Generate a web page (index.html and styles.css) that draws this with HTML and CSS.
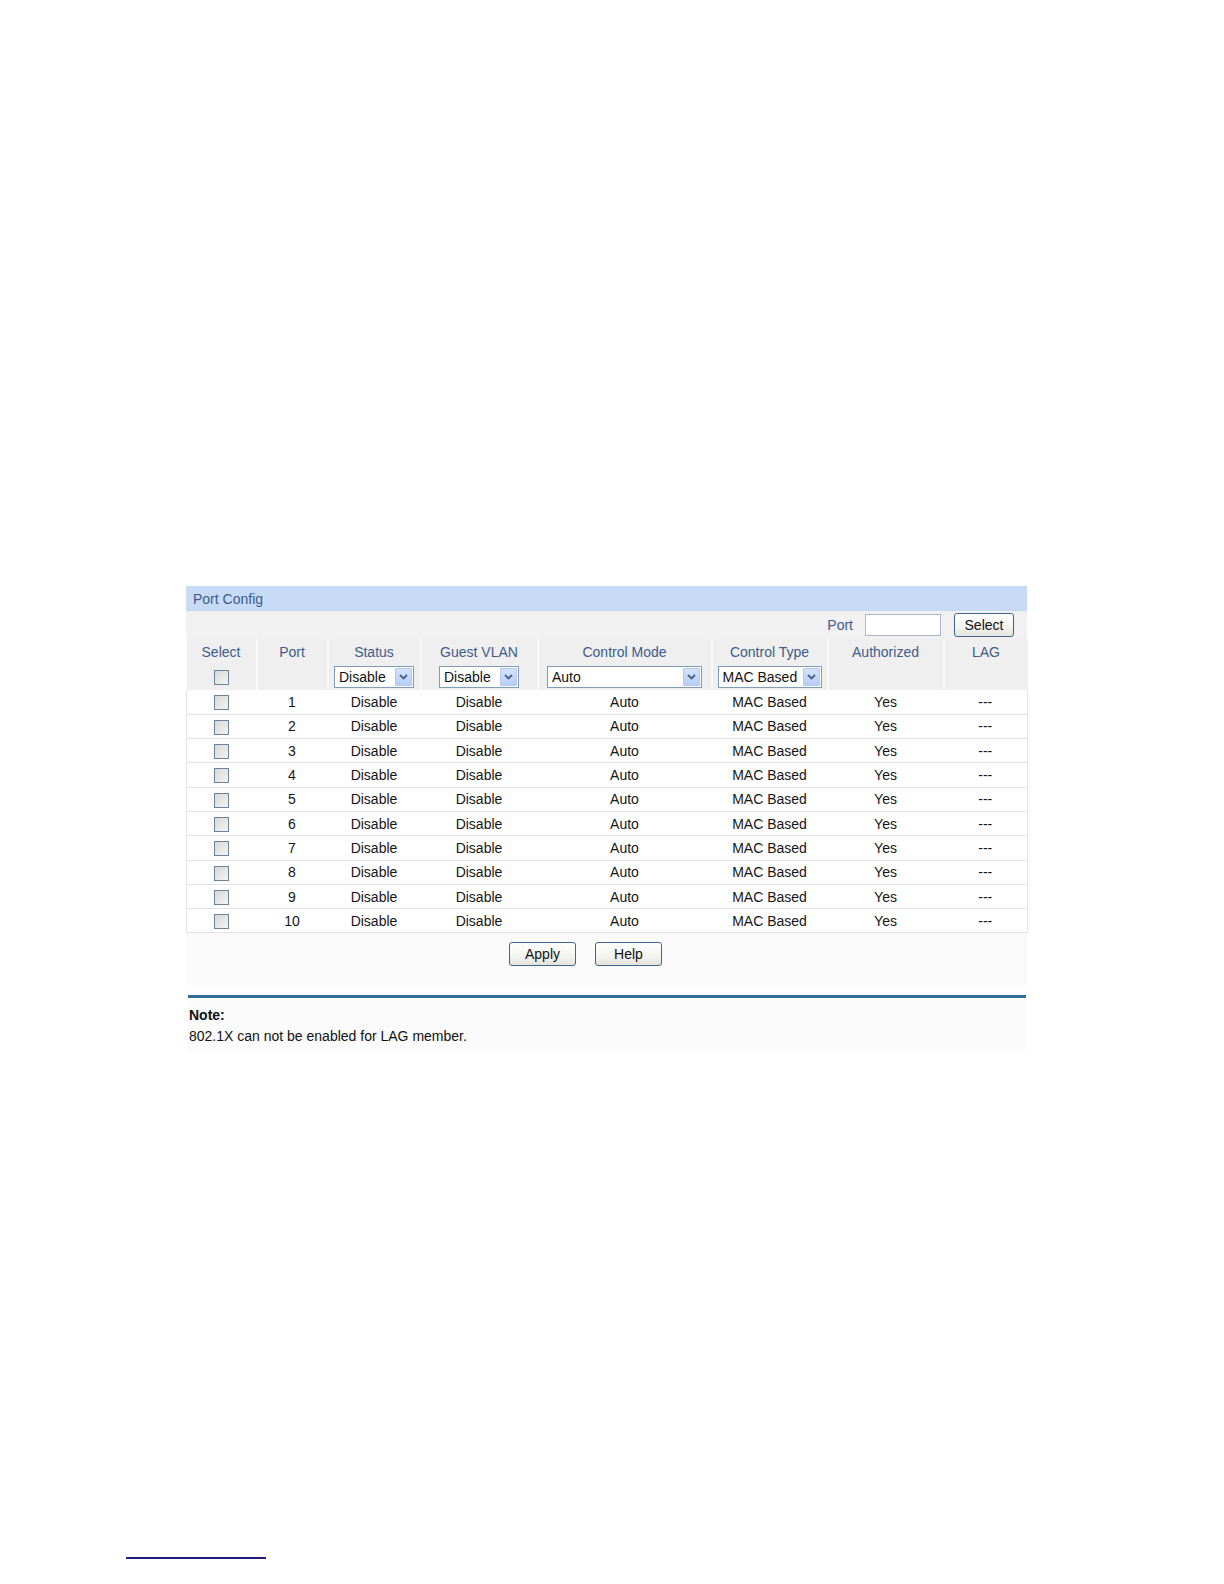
FILE: index.html
```html
<!DOCTYPE html>
<html>
<head>
<meta charset="utf-8">
<link rel="stylesheet" href="styles.css">
</head>
<body>
<div class="panel">
  <div class="title">Port Config</div>
  <div class="toolbar">
    <span class="tlabel">Port</span>
    <span class="textbox"></span>
    <span class="btn btn-select">Select</span>
  </div>
  <table class="grid">
    <colgroup>
      <col style="width:70px"><col style="width:71px"><col style="width:93px"><col style="width:117px"><col style="width:174px"><col style="width:116px"><col style="width:116px"><col style="width:84px">
    </colgroup>
    <thead>
      <tr class="hdr">
        <th>Select</th><th>Port</th><th>Status</th><th>Guest VLAN</th><th>Control Mode</th><th>Control Type</th><th>Authorized</th><th>LAG</th>
      </tr>
      <tr class="filter">
        <td><span class="cb"></span></td>
        <td></td>
        <td><span class="sel w80"><span class="val">Disable</span><span class="arr"><svg width="9" height="6" viewBox="0 0 9 6"><path d="M1 1 L4.5 4.5 L8 1" fill="none" stroke="#4d6185" stroke-width="1.8"/></svg></span></span></td>
        <td><span class="sel w80"><span class="val">Disable</span><span class="arr"><svg width="9" height="6" viewBox="0 0 9 6"><path d="M1 1 L4.5 4.5 L8 1" fill="none" stroke="#4d6185" stroke-width="1.8"/></svg></span></span></td>
        <td><span class="sel w155"><span class="val">Auto</span><span class="arr"><svg width="9" height="6" viewBox="0 0 9 6"><path d="M1 1 L4.5 4.5 L8 1" fill="none" stroke="#4d6185" stroke-width="1.8"/></svg></span></span></td>
        <td><span class="sel w104"><span class="val">MAC Based</span><span class="arr"><svg width="9" height="6" viewBox="0 0 9 6"><path d="M1 1 L4.5 4.5 L8 1" fill="none" stroke="#4d6185" stroke-width="1.8"/></svg></span></span></td>
        <td></td>
        <td></td>
      </tr>
    </thead>
    <tbody>
      <tr><td><span class="cb"></span></td><td>1</td><td>Disable</td><td>Disable</td><td>Auto</td><td>MAC Based</td><td>Yes</td><td>---</td></tr>
      <tr><td><span class="cb"></span></td><td>2</td><td>Disable</td><td>Disable</td><td>Auto</td><td>MAC Based</td><td>Yes</td><td>---</td></tr>
      <tr><td><span class="cb"></span></td><td>3</td><td>Disable</td><td>Disable</td><td>Auto</td><td>MAC Based</td><td>Yes</td><td>---</td></tr>
      <tr><td><span class="cb"></span></td><td>4</td><td>Disable</td><td>Disable</td><td>Auto</td><td>MAC Based</td><td>Yes</td><td>---</td></tr>
      <tr><td><span class="cb"></span></td><td>5</td><td>Disable</td><td>Disable</td><td>Auto</td><td>MAC Based</td><td>Yes</td><td>---</td></tr>
      <tr><td><span class="cb"></span></td><td>6</td><td>Disable</td><td>Disable</td><td>Auto</td><td>MAC Based</td><td>Yes</td><td>---</td></tr>
      <tr><td><span class="cb"></span></td><td>7</td><td>Disable</td><td>Disable</td><td>Auto</td><td>MAC Based</td><td>Yes</td><td>---</td></tr>
      <tr><td><span class="cb"></span></td><td>8</td><td>Disable</td><td>Disable</td><td>Auto</td><td>MAC Based</td><td>Yes</td><td>---</td></tr>
      <tr><td><span class="cb"></span></td><td>9</td><td>Disable</td><td>Disable</td><td>Auto</td><td>MAC Based</td><td>Yes</td><td>---</td></tr>
      <tr><td><span class="cb"></span></td><td>10</td><td>Disable</td><td>Disable</td><td>Auto</td><td>MAC Based</td><td>Yes</td><td>---</td></tr>
    </tbody>
  </table>
  <div class="actions">
    <span class="btn btn-act">Apply</span>
    <span class="btn btn-act">Help</span>
  </div>
  <div class="note">
    <div class="note-title">Note:</div>
    <div class="note-text">802.1X can not be enabled for LAG member.</div>
  </div>
</div>
<div class="footrule"></div>
</body>
</html>
```

FILE: styles.css
```css
html, body {
  margin: 0;
  padding: 0;
  background: #ffffff;
}
body {
  width: 1224px;
  height: 1584px;
  font-family: "Liberation Sans", Arial, sans-serif;
  font-size: 14px;
  color: #1a1a1a;
  position: relative;
}
.panel {
  margin-left: 186px;
  margin-top: 586px;
  width: 841px;
}
.title {
  height: 25px;
  line-height: 26px;
  background: #c7dbf6;
  color: #3e5c8e;
  padding-left: 7px;
  font-size: 14px;
}
.toolbar {
  height: 28px;
  background: #f1f1f1;
  display: flex;
  align-items: center;
  justify-content: flex-end;
  padding-right: 13px;
}
.tlabel {
  color: #3e5c8e;
  margin-right: 12px;
}
.textbox {
  display: inline-block;
  width: 74px;
  height: 20px;
  border: 1px solid #a9b8c8;
  background: #fff;
  margin-right: 13px;
}
.btn {
  display: inline-flex;
  align-items: center;
  justify-content: center;
  border: 1px solid #3d6790;
  border-radius: 3px;
  background: linear-gradient(#ffffff, #f3f3f0 60%, #e3e3dc);
  color: #111;
  box-sizing: border-box;
  font-size: 14px;
}
.btn-select {
  width: 60px;
  height: 24px;
}
.grid {
  width: 841px;
  border-collapse: collapse;
  table-layout: fixed;
}
.grid th {
  height: 25px;
  padding: 0;
  font-weight: normal;
  color: #3e5c8e;
  background: #efefef;
  border-left: 2px solid #fafafa;
  font-size: 14px;
  text-align: center;
}
.grid th:first-child { border-left: none; }
.filter td {
  height: 26px;
  padding: 0;
  background: #efefef;
  border-left: 2px solid #fafafa;
  text-align: center;
  vertical-align: middle;
}
.filter td:first-child { border-left: none; }
.grid tbody tr {
  height: 24.3px;
}
.grid tbody td {
  padding: 0;
  text-align: center;
  background: #ffffff;
  border-bottom: 1px solid #e3e3e3;
  font-size: 14px;
  color: #151515;
}
.grid tbody tr td:first-child { border-left: 1px solid #e6e6e6; }
.grid tbody tr td:last-child { border-right: 1px solid #e6e6e6; }
.cb {
  display: inline-block;
  width: 13px;
  height: 13px;
  border: 1px solid #6a84a0;
  background: linear-gradient(135deg, #d8d8d4, #f4f4f2);
  vertical-align: middle;
}
.sel {
  display: inline-flex;
  align-items: center;
  justify-content: space-between;
  box-sizing: border-box;
  height: 22px;
  border: 1px solid #7f9db9;
  background: #fff;
  padding: 0 1px 0 4px;
  vertical-align: middle;
  color: #111;
}
.w80 { width: 80px; }
.w155 { width: 155px; }
.w104 { width: 104px; }
.sel .val { white-space: nowrap; }
.arr {
  display: inline-flex;
  align-items: center;
  justify-content: center;
  width: 17px;
  height: 18px;
  background: linear-gradient(#d4e2fb, #b8cdf7);
  border: 1px solid #b4c8ef;
  box-sizing: border-box;
  border-radius: 1px;
}
.actions {
  height: 52px;
  background: #fafafa;
  display: flex;
  justify-content: center;
  align-items: flex-start;
  padding-top: 9px;
  box-sizing: border-box;
  gap: 19px;
  padding-right: 42px;
}
.btn-act {
  width: 67px;
  height: 24px;
}
.note {
  margin-top: 10px;
  margin-left: 2px;
  width: 837px;
  border-top: 3px solid #2d6e9d;
  background: #fbfbfb;
  padding: 7px 0 4px 1px;
  font-family: "Liberation Sans Narrow", "Liberation Sans", Arial, sans-serif;
}
.note-title {
  font-weight: bold;
  font-size: 14px;
  line-height: 20px;
  color: #111;
}
.note-text {
  font-size: 14px;
  line-height: 22px;
  color: #111;
}
.footrule {
  position: absolute;
  left: 126px;
  top: 1557px;
  width: 140px;
  height: 2px;
  background: #1d1d7d;
}
```
